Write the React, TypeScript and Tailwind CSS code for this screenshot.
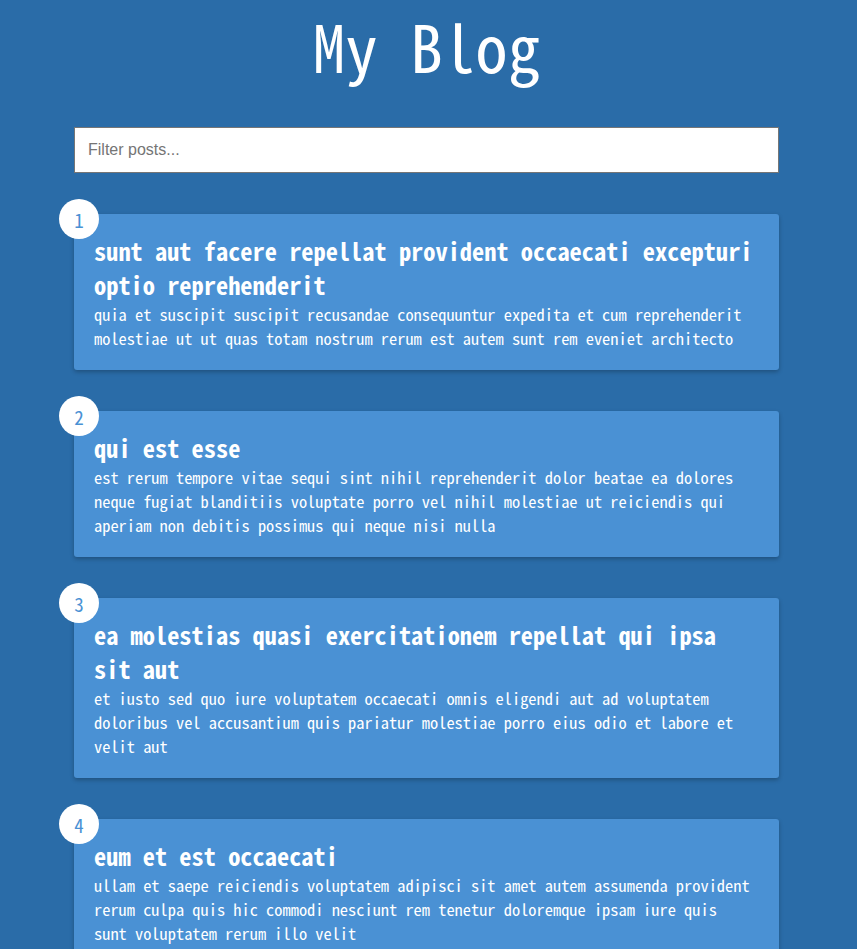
import React from "react";

const posts = [
  {
    id: 1,
    title: "sunt aut facere repellat provident occaecati excepturi optio reprehenderit",
    body: "quia et suscipit suscipit recusandae consequuntur expedita et cum reprehenderit molestiae ut ut quas totam nostrum rerum est autem sunt rem eveniet architecto",
  },
  {
    id: 2,
    title: "qui est esse",
    body: "est rerum tempore vitae sequi sint nihil reprehenderit dolor beatae ea dolores neque fugiat blanditiis voluptate porro vel nihil molestiae ut reiciendis qui aperiam non debitis possimus qui neque nisi nulla",
  },
  {
    id: 3,
    title: "ea molestias quasi exercitationem repellat qui ipsa sit aut",
    body: "et iusto sed quo iure voluptatem occaecati omnis eligendi aut ad voluptatem doloribus vel accusantium quis pariatur molestiae porro eius odio et labore et velit aut",
  },
  {
    id: 4,
    title: "eum et est occaecati",
    body: "ullam et saepe reiciendis voluptatem adipisci sit amet autem assumenda provident rerum culpa quis hic commodi nesciunt rem tenetur doloremque ipsam iure quis sunt voluptatem rerum illo velit",
  },
];

const font = "font-['Noto_Sans_Mono_CJK_KR','Noto_Sans_Mono_CJK_SC','Liberation_Mono',monospace]";

export default function App() {
  return (
    <div className={`min-h-screen bg-[#2a6ca8] text-white ${font}`}>
      <div className="w-[705px] mx-auto -translate-x-[2px] pb-10">
        <h1 className="pt-[5px] text-center text-[65px] leading-[80px] font-normal">My Blog</h1>
        <input
          type="text"
          placeholder="Filter posts..."
          className="mt-[42px] block w-full h-[46px] bg-white border border-[#767676] px-[13px] text-[16px] text-black placeholder:text-[#757575] font-['Liberation_Sans',Arial,sans-serif] outline-none"
        />
        <div className="mt-[41px] flex flex-col gap-[41px]">
          {posts.map((p) => (
            <div
              key={p.id}
              className="relative bg-[#4a91d4] rounded-[3px] pl-5 pr-[23px] pt-5 pb-5 shadow-[0_2px_4px_rgba(0,0,0,0.25)]"
            >
              <div className="absolute -top-[15px] -left-[15px] w-10 h-10 rounded-full bg-white text-[#4a91d4] flex items-center justify-center text-[19px] leading-none">
                {p.id}
              </div>
              <h2 className="text-[24.4px] leading-[34px] font-bold">{p.title}</h2>
              <p className="text-[16.4px] leading-[24px]">{p.body}</p>
            </div>
          ))}
        </div>
      </div>
    </div>
  );
}
